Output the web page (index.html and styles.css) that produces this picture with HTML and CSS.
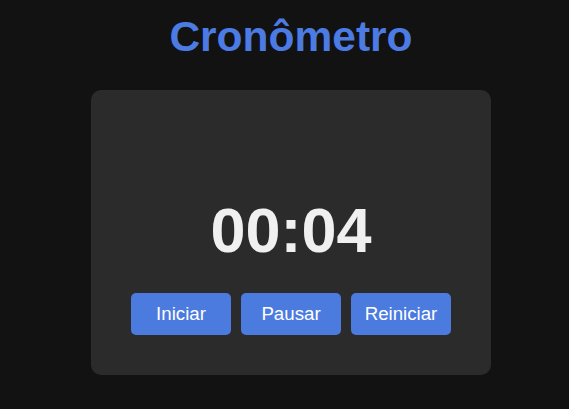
FILE: index.html
```html
<!DOCTYPE html>
<html lang="pt-BR">
<head>
<meta charset="utf-8">
<title>Cronômetro</title>
<link rel="stylesheet" href="styles.css">
</head>
<body>
<h1 class="title">Cronômetro</h1>
<div class="card">
  <div class="time">00:04</div>
  <div class="controls">
    <button class="btn">Iniciar</button>
    <button class="btn">Pausar</button>
    <button class="btn">Reiniciar</button>
  </div>
</div>
</body>
</html>
```
FILE: styles.css
```css
html, body {
  margin: 0;
  padding: 0;
  background: #121212;
}
body {
  font-family: "Liberation Sans", Arial, sans-serif;
  display: flex;
  flex-direction: column;
  align-items: center;
  min-height: 409px;
  padding-left: 13px;
  box-sizing: border-box;
}
.title {
  margin: 13px 0 0;
  font-size: 42.5px;
  line-height: 47px;
  font-weight: bold;
  color: #4c7be3;
}
.card {
  margin-top: 30px;
  width: 400px;
  height: 285px;
  box-sizing: border-box;
  background: #2b2b2b;
  border-radius: 10px;
  display: flex;
  flex-direction: column;
  align-items: center;
  justify-content: flex-end;
  padding-bottom: 40px;
}
.time {
  font-size: 63px;
  font-weight: bold;
  color: #f0f0f0;
  line-height: 74px;
  margin-bottom: 26px;
}
.controls {
  display: flex;
  gap: 10px;
}
.btn {
  width: 100px;
  height: 42px;
  border: none;
  border-radius: 5px;
  background: #4c7be0;
  color: #ffffff;
  font-family: "Liberation Sans", Arial, sans-serif;
  font-size: 18.7px;
  padding: 0;
}
```
